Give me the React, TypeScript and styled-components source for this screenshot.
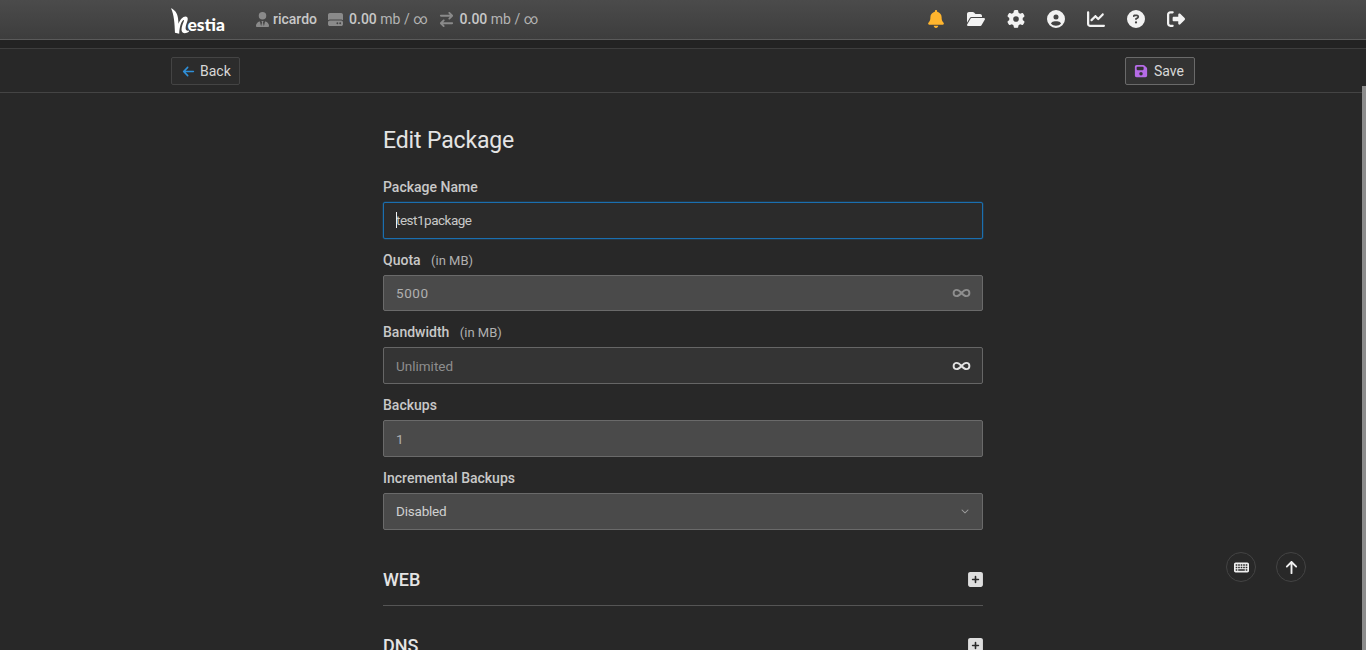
import React from 'react';
import styled, { createGlobalStyle } from 'styled-components';
import {
  FaArrowLeft,
  FaArrowRightArrowLeft,
  FaArrowUp,
  FaBell,
  FaChartLine,
  FaChevronDown,
  FaCircleQuestion,
  FaCircleUser,
  FaFloppyDisk,
  FaFolderOpen,
  FaGear,
  FaHardDrive,
  FaKeyboard,
  FaRightFromBracket,
  FaSquarePlus,
  FaUserTie,
} from 'react-icons/fa6';
import { Infinity as InfinityIcon } from 'lucide-react';

const FONT = 'Roboto, "Noto Sans", sans-serif';

const GlobalStyle = createGlobalStyle`
  html, body {
    margin: 0;
    height: 100%;
    overflow: hidden;
    background: #282828;
    color: #d0d0d0;
    font-family: ${FONT};
    font-size: 14px;
  }
  * { box-sizing: border-box; }
`;

const TopBar = styled.header`
  height: 40px;
  background: linear-gradient(#4b4b4b, #3d3d3d);
  border-bottom: 1px solid #5a5a5a;
`;

const Inner = styled.div`
  width: 1024px;
  margin: 0 auto;
  height: 100%;
  display: flex;
  align-items: center;
  justify-content: space-between;
`;

const LeftGroup = styled.div`
  display: flex;
  align-items: center;
`;

const Logo = styled.div`
  display: flex;
  align-items: flex-end;
  width: 54px;
  height: 30px;
  margin-right: 30px;
  margin-top: 3px;
  color: #fff;
`;

const LogoText = styled.span`
  font-family: "Lato", sans-serif;
  font-weight: 900;
  font-size: 17.5px;
  line-height: 23px;
  margin-left: -2px;
`;

const Stat = styled.span<{ $gap?: number }>`
  display: flex;
  align-items: center;
  gap: ${(p) => p.$gap ?? 6}px;
  margin: -1px 11px 0 0;
  color: #b4b4b4;
  font-size: 14px;
  white-space: nowrap;
  svg { color: #8a8a8a; font-size: 15px; }
  b { font-weight: 500; color: #c8c8c8; }
`;

const IconGroup = styled.nav`
  display: flex;
  align-items: center;
  margin: -2px -1px 0 0;
`;

const NavIcon = styled.span<{ $color?: string }>`
  width: 40px;
  display: flex;
  justify-content: center;
  color: ${(p) => p.$color || '#f2f2f2'};
  font-size: 18px;
`;

const Band = styled.div`
  height: 9px;
  background: #232323;
  border-bottom: 1px solid #3e3e3e;
`;

const Toolbar = styled.div`
  height: 44px;
  border-bottom: 1px solid #444;
  background: #282828;
`;

const ToolButton = styled.button<{ $primary?: boolean }>`
  display: flex;
  align-items: center;
  gap: ${(p) => (p.$primary ? 6 : 5)}px;
  height: 28px;
  padding: ${(p) => (p.$primary ? '1px 10px 0 8px' : '1px 8px 0 10px')};
  font-family: ${FONT};
  font-size: 14px;
  color: #d8d8d8;
  background: ${(p) => (p.$primary ? '#333' : '#2c2c2c')};
  border: 1px solid ${(p) => (p.$primary ? '#6a6a6a' : '#444')};
  border-radius: 2px;
`;

const BackIcon = styled(FaArrowLeft)`
  color: #2f8fd8;
  font-size: 13px;
`;

const SaveIcon = styled(FaFloppyDisk)`
  color: #b56be6;
  font-size: 14px;
`;

const Form = styled.main`
  width: 600px;
  margin: 0 auto;
  padding-top: 31px;
`;

const Title = styled.h1`
  margin: 0 0 17.9px;
  font-size: 23px;
  font-weight: 400;
  line-height: 34px;
  letter-spacing: -0.15px;
  color: #e4e4e4;
`;

const Field = styled.div`
  margin-bottom: 10px;
`;

const Label = styled.label`
  display: block;
  height: 21px;
  line-height: 23px;
  margin-bottom: 5px;
  font-size: 14px;
  font-weight: 500;
  color: #c8c8c8;
  small {
    font-size: 13px;
    font-weight: 400;
    margin-left: 7px;
    color: #b0b0b0;
  }
`;

const InputWrap = styled.div`
  position: relative;
`;

const Input = styled.input<{ $tone?: 'focus' | 'plain' | 'disabled' }>`
  display: block;
  width: 100%;
  height: 36.75px;
  padding: 0 12px;
  font-family: ${FONT};
  font-size: 13.5px;
  letter-spacing: ${(p) => (p.$tone === 'focus' ? '-0.5px' : p.$tone === 'disabled' ? '0.6px' : '0')};
  color: ${(p) => (p.$tone === 'disabled' ? '#b0b0b0' : '#c8c8c8')};
  border-radius: 2px;
  outline: none;
  border: 1px solid
    ${(p) => (p.$tone === 'focus' ? '#1a6fb0' : p.$tone === 'disabled' ? '#6a6a6a' : '#666')};
  background: ${(p) =>
    p.$tone === 'focus' ? '#2b2b2b' : p.$tone === 'disabled' ? '#4a4a4a' : '#343434'};
  box-shadow: ${(p) => (p.$tone === 'focus' ? '0 0 0 0.5px #1a6fb066' : 'none')};
  &::placeholder { color: #8e8e8e; opacity: 1; }
`;

const Caret = styled.span`
  position: absolute;
  left: 13px;
  top: 10px;
  width: 1px;
  height: 16px;
  background: #f0f0f0;
`;

const InfinityMark = styled.span<{ $dim?: boolean }>`
  position: absolute;
  right: 12px;
  top: 50%;
  transform: translateY(-50%);
  display: flex;
  color: ${(p) => (p.$dim ? '#8e8e8e' : '#e0e0e0')};
`;

const Select = styled.div`
  display: flex;
  align-items: center;
  justify-content: space-between;
  height: 36.75px;
  padding: 0 13px 0 12px;
  border: 1px solid #6a6a6a;
  border-radius: 2px;
  background: #4a4a4a;
  color: #d0d0d0;
  font-size: 13.5px;
  letter-spacing: -0.2px;
  svg { font-size: 8px; color: #a0a0a0; }
`;

const Section = styled.div`
  display: flex;
  align-items: center;
  justify-content: space-between;
  height: 51px;
  margin-bottom: 15px;
  border-bottom: 1px solid #555;
  color: #e4e4e4;
  font-size: 18px;
  font-weight: 500;
  svg { font-size: 17px; color: #dedede; margin-right: -1px; }
`;

const SectionList = styled.div`
  margin-top: 25px;
`;

const FloatButtons = styled.div`
  position: fixed;
  left: 1226px;
  top: 552px;
  display: flex;
  gap: 20px;
`;

const RoundButton = styled.button`
  width: 30px;
  height: 30px;
  display: flex;
  align-items: center;
  justify-content: center;
  padding: 0;
  border-radius: 50%;
  border: 1px solid #444;
  background: #282828;
  color: #f0f0f0;
  font-size: 15px;
`;

const ScrollThumb = styled.div`
  position: fixed;
  right: 0;
  top: 86px;
  bottom: 0;
  width: 4px;
  background: #8c8c8c;
`;

const HMark = () => (
  <svg width="21" height="30" viewBox="0 0 21 30" fill="currentColor">
    <path d="M0 0.5C4 2 7.5 6 8 12L8.6 18C10.5 13.5 13.5 10 16.5 10C19.5 10 19.5 13 18.3 16C17 19.5 16.3 22.5 16.8 24.5C17.3 26.3 19 26.5 21 25.5L21 26.5C18 29.5 12.5 30 12 25.5C11.8 22 13.5 18 14.5 15.5C15 14 14.5 13.5 13.5 14.5C11.5 16.5 9.8 21 9.3 29.5L4.5 28.5C4.2 18 3.5 8 0 0.5Z" />
  </svg>
);

const App = () => (
  <>
    <GlobalStyle />
    <TopBar>
      <Inner>
        <LeftGroup>
          <Logo>
            <HMark />
            <LogoText>estia</LogoText>
          </Logo>
          <Stat $gap={3}>
            <FaUserTie />
            <b>ricardo</b>
          </Stat>
          <Stat>
            <FaHardDrive />
            <span>
              <b>0.00</b> mb / ∞
            </span>
          </Stat>
          <Stat>
            <FaArrowRightArrowLeft />
            <span>
              <b>0.00</b> mb / ∞
            </span>
          </Stat>
        </LeftGroup>
        <IconGroup>
          <NavIcon $color="#ffb52e"><FaBell /></NavIcon>
          <NavIcon><FaFolderOpen /></NavIcon>
          <NavIcon><FaGear /></NavIcon>
          <NavIcon><FaCircleUser /></NavIcon>
          <NavIcon><FaChartLine /></NavIcon>
          <NavIcon><FaCircleQuestion /></NavIcon>
          <NavIcon><FaRightFromBracket /></NavIcon>
        </IconGroup>
      </Inner>
    </TopBar>
    <Band />
    <Toolbar>
      <Inner>
        <ToolButton>
          <BackIcon />
          Back
        </ToolButton>
        <ToolButton $primary>
          <SaveIcon />
          Save
        </ToolButton>
      </Inner>
    </Toolbar>
    <Form>
      <Title>Edit Package</Title>
      <Field>
        <Label>Package Name</Label>
        <InputWrap>
          <Input $tone="focus" defaultValue="test1package" />
          <Caret />
        </InputWrap>
      </Field>
      <Field>
        <Label>
          Quota <small>(in MB)</small>
        </Label>
        <InputWrap>
          <Input $tone="disabled" defaultValue="5000" disabled />
          <InfinityMark $dim><InfinityIcon size={19} strokeWidth={2.4} /></InfinityMark>
        </InputWrap>
      </Field>
      <Field>
        <Label>
          Bandwidth <small>(in MB)</small>
        </Label>
        <InputWrap>
          <Input $tone="plain" placeholder="Unlimited" />
          <InfinityMark><InfinityIcon size={19} strokeWidth={2.4} /></InfinityMark>
        </InputWrap>
      </Field>
      <Field>
        <Label>Backups</Label>
        <Input $tone="disabled" defaultValue="1" disabled />
      </Field>
      <Field>
        <Label>Incremental Backups</Label>
        <Select>
          Disabled
          <FaChevronDown />
        </Select>
      </Field>
      <SectionList>
        <Section>
          WEB
          <FaSquarePlus />
        </Section>
        <Section>
          DNS
          <FaSquarePlus />
        </Section>
      </SectionList>
    </Form>
    <FloatButtons>
      <RoundButton><FaKeyboard /></RoundButton>
      <RoundButton><FaArrowUp /></RoundButton>
    </FloatButtons>
    <ScrollThumb />
  </>
);

export default App;
